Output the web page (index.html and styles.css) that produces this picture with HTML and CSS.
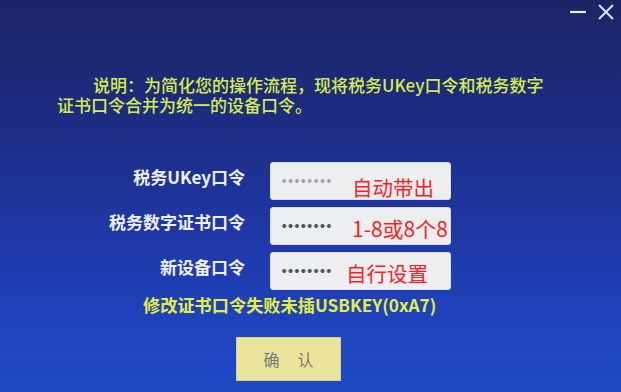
FILE: index.html
```html
<!DOCTYPE html>
<html lang="zh-CN">
<head>
<meta charset="utf-8">
<title>设备口令</title>
<link rel="stylesheet" href="styles.css">
</head>
<body>
<div class="window">
  <div class="titlebar">
    <svg class="win-btn" width="18" height="18" viewBox="0 0 18 18"><path d="M1 10H17" stroke="#e6ecf8" stroke-width="2.2"/></svg>
    <svg class="win-btn" width="18" height="18" viewBox="0 0 18 18"><path d="M2 3L16 17M16 3L2 17" stroke="#d6e4f8" stroke-width="2"/></svg>
  </div>
  <p class="notice">说明：为简化您的操作流程，现将税务UKey口令和税务数字证书口令合并为统一的设备口令。</p>
  <div class="form">
    <div class="row">
      <span class="label">税务UKey口令</span>
      <div class="field"><span class="dots dots-light"></span><span class="note note-1">自动带出</span></div>
    </div>
    <div class="row">
      <span class="label">税务数字证书口令</span>
      <div class="field"><span class="dots"></span><span class="note note-2">1-8或8个8</span></div>
    </div>
    <div class="row">
      <span class="label">新设备口令</span>
      <div class="field"><span class="dots"></span><span class="note note-3">自行设置</span></div>
    </div>
  </div>
  <p class="error">修改证书口令失败未插USBKEY(0xA7)</p>
  <button class="confirm"><span>确</span><span>认</span></button>
</div>
</body>
</html>
```
FILE: styles.css
```css
html, body {
  margin: 0;
  padding: 0;
}
body {
  width: 621px;
  height: 392px;
  overflow: hidden;
  font-family: "Noto Sans CJK SC", "Noto Sans", sans-serif;
  background: linear-gradient(180deg, #1b2463 0%, #1e2c82 30%, #1f38a6 60%, #1f44bf 85%, #2049c6 100%);
}
.window {
  display: flex;
  flex-direction: column;
  height: 392px;
}
.titlebar {
  display: flex;
  justify-content: flex-end;
  gap: 10px;
  padding: 2px 6px 0 0;
  height: 22px;
}
.win-btn {
  display: block;
}
.notice {
  margin: 51px 0 0 57px;
  width: 495px;
  font-size: 17px;
  line-height: 20px;
  font-weight: 500;
  text-indent: 36px;
  color: #d4ee4a;
}
.form {
  margin-top: 47px;
  display: flex;
  flex-direction: column;
  gap: 7px;
}
.row {
  display: flex;
  align-items: center;
}
.label {
  width: 245px;
  text-align: right;
  font-size: 17px;
  font-weight: bold;
  color: #eef0fa;
  padding-bottom: 10px;
}
.field {
  position: relative;
  margin-left: 25px;
  width: 181px;
  height: 38px;
  box-sizing: border-box;
  background: #eceef0;
  border: 1px solid #d8dce4;
  border-radius: 3px;
  display: flex;
  align-items: center;
  padding-left: 10px;
}
.dots {
  display: block;
  width: 51px;
  height: 4px;
  background: radial-gradient(circle, #50545e 1.7px, transparent 2.2px) 0 0 / 6.4px 4px repeat-x;
}
.dots-light {
  background: radial-gradient(circle, #9a9ea8 1.6px, transparent 2.1px) 0 0 / 6.4px 4px repeat-x;
}
.note {
  position: absolute;
  font-size: 20.5px;
  line-height: 24px;
  color: #ff1e1e;
  white-space: nowrap;
}
.note-1 { left: 81px; top: 12px; }
.note-2 { left: 81px; top: 8px; font-size: 21px; }
.note-3 { left: 75px; top: 8px; }
.error {
  margin: 4px 0 0 143px;
  font-size: 17.2px;
  line-height: 22px;
  font-weight: bold;
  color: #e2ee44;
  white-space: nowrap;
}
.confirm {
  margin: 21px 0 0 236px;
  width: 105px;
  height: 44px;
  border: 1px solid #d6d08a;
  border-radius: 0;
  background: #ebe59c;
  color: #7a7a70;
  font-family: "Noto Sans CJK SC", sans-serif;
  font-size: 16px;
  display: flex;
  align-items: center;
  justify-content: center;
  gap: 18px;
  padding: 0;
}
```
